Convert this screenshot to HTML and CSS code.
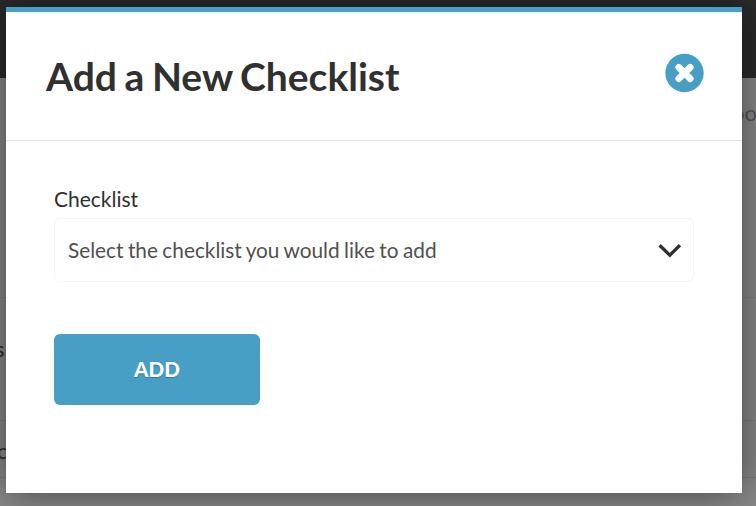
FILE: index.html
```html
<!DOCTYPE html>
<html lang="en">
<head>
<meta charset="utf-8">
<title>Add a New Checklist</title>
<link rel="stylesheet" href="styles.css">
</head>
<body>
<div class="backdrop">
  <div class="topbar"></div>
  <div class="intro"><span>oo</span></div>
  <div class="section"><span>s</span></div>
  <div class="row"><span>c</span></div>
</div>
<div class="modal" role="dialog">
  <header class="modal-header">
    <h1>Add a New Checklist</h1>
    <button class="close" aria-label="Close">
      <svg width="39" height="40" viewBox="0 0 39 40"><circle cx="19.5" cy="20" r="19.2" fill="#489fc6"/><path d="M14 14.5 25 25.5M25 14.5 14 25.5" stroke="#fff" stroke-width="4.6" stroke-linecap="square"/><path d="M13.8 14.3 25.2 25.7M25.2 14.3 13.8 25.7" stroke="#fff" stroke-width="6.8" stroke-linecap="round"/></svg>
    </button>
  </header>
  <div class="modal-body">
    <label class="label">Checklist</label>
    <div class="select">
      <span>Select the checklist you would like to add</span>
      <svg width="24" height="16" viewBox="0 0 24 16"><path d="M2.6 3.2 12.8 13.2 23 3.2" fill="none" stroke="#303030" stroke-width="3.3"/></svg>
    </div>
    <button class="add">ADD</button>
  </div>
</div>
</body>
</html>
```
FILE: styles.css
```css
* { box-sizing: border-box; }
body {
  margin: 0;
  width: 756px;
  height: 506px;
  overflow: hidden;
  font-family: Lato, sans-serif;
  color: #303030;
}
button { border: 0; padding: 0; font-family: inherit; }
.backdrop {
  height: 506px;
  background: #8a8a8a;
  font-size: 22px;
  line-height: 28px;
}
.topbar { height: 78px; background: #2b2b2b; }
.intro {
  height: 220px;
  padding-top: 21px;
  border-bottom: 1px solid #818181;
  text-align: right;
  color: #585858;
}
.intro span { margin-right: -1px; }
.section { height: 123px; padding-top: 37px; border-bottom: 1px solid #7c7c7c; }
.section span { margin-left: -5px; font-weight: 500; }
.row { height: 57px; padding-top: 16px; border-bottom: 1px solid #7c7c7c; }
.row span { margin-left: -3px; }
.modal {
  position: absolute;
  left: 6px;
  top: 7px;
  width: 736px;
  height: 486px;
  background: #fff;
  border-top: 5px solid #489fc6;
  box-shadow: 0 0 40px rgba(0, 0, 0, .52);
}
.modal-header {
  display: flex;
  justify-content: space-between;
  align-items: flex-start;
  height: 129px;
  padding: 41px 38px 0 40px;
  border-bottom: 1px solid #dfe0e4;
}
h1 {
  margin: 0;
  font-size: 39px;
  line-height: 46px;
  font-weight: 700;
  word-spacing: -1.9px;
  white-space: nowrap;
}
.close { width: 39px; height: 40px; background: none; }
.close svg { display: block; }
.modal-body { padding: 44px 48px 0; }
.label { display: block; font-size: 21px; line-height: 28px; }
.select {
  display: flex;
  align-items: center;
  justify-content: space-between;
  height: 64px;
  margin-top: 5px;
  padding: 0 12px 0 13px;
  border: 1px solid #f5f5f5;
  border-radius: 6px;
  font-size: 20.8px;
  word-spacing: -.9px;
  color: #505050;
}
.select span { padding-bottom: 1px; }
.add {
  display: block;
  width: 206px;
  height: 71px;
  margin-top: 52px;
  padding: 0 0 2px;
  border-radius: 6px;
  background: #489fc6;
  color: #fff;
  font-size: 20.6px;
  font-weight: 900;
  text-shadow: 0 1px 1px rgba(0, 0, 0, .25);
}
```
